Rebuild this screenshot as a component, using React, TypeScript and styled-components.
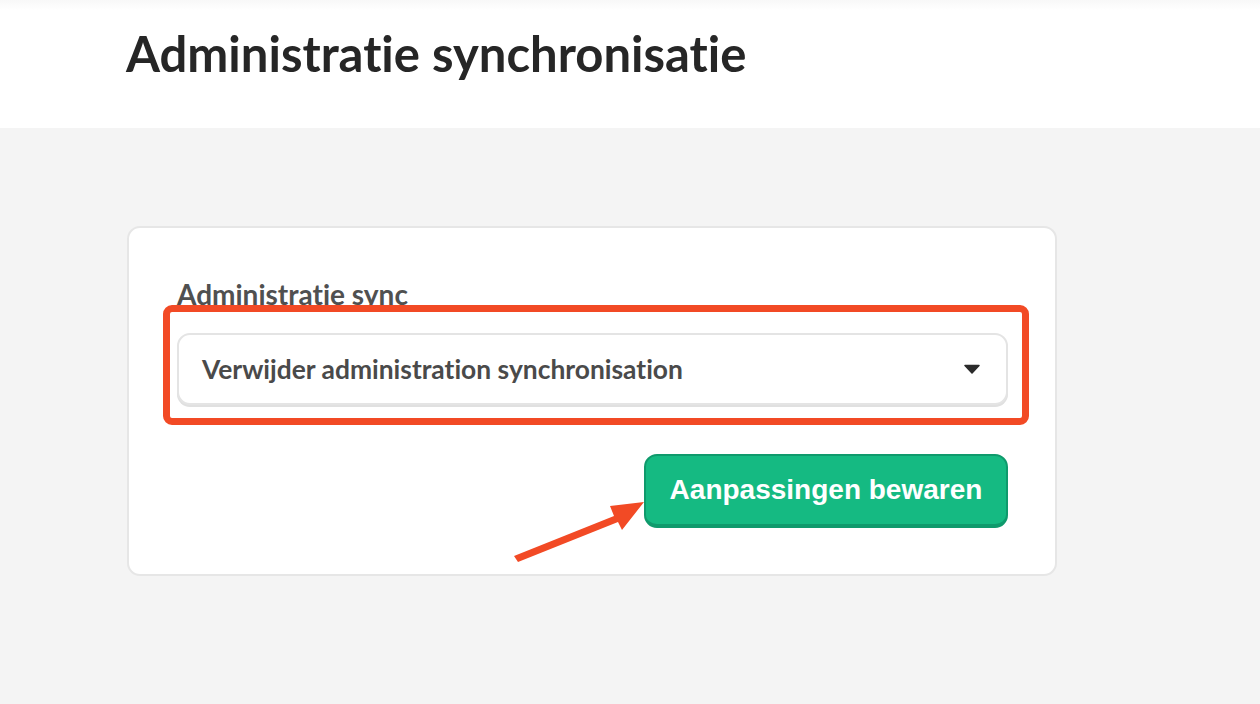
import React from "react";
import styled, { createGlobalStyle } from "styled-components";

const GlobalStyle = createGlobalStyle`
  html, body {
    margin: 0;
    padding: 0;
    background: #f4f4f4;
    width: 1260px;
    height: 704px;
    overflow: hidden;
  }
  * { box-sizing: border-box; font-variant-ligatures: none; }
`;

const Page = styled.div`
  width: 1260px;
  height: 704px;
  background: #f4f4f4;
  font-family: Lato, "Open Sans", sans-serif;
`;

const Header = styled.header`
  height: 128px;
  background: linear-gradient(#f8f8f8 0px, #ffffff 10px);
  padding: 25px 0 0 126px;
`;

const Title = styled.h1`
  margin: 0;
  font-family: Lato, sans-serif;
  font-weight: 700;
  font-size: 49px;
  line-height: 56px;
  color: #262626;
`;

const Main = styled.main`
  padding: 98px 0 0 127px;
`;

const Card = styled.section`
  width: 930px;
  height: 350px;
  background: #ffffff;
  border: 2px solid #e6e6e6;
  border-radius: 13px;
  padding: 52px 48px 0 48px;
  display: flex;
  flex-direction: column;
`;

const Label = styled.label`
  font-family: Lato, sans-serif;
  font-weight: 700;
  font-size: 28px;
  line-height: 28px;
  color: #505050;
  height: 28px;
  white-space: nowrap;
`;

const FieldWrap = styled.div`
  position: relative;
  margin-top: 25px;
`;

const Highlight = styled.div`
  position: absolute;
  left: -14px;
  top: -28px;
  right: -22px;
  bottom: -20px;
  border: 7px solid #f24a25;
  border-radius: 9px;
  pointer-events: none;
`;

const Select = styled.div`
  height: 72px;
  width: 831px;
  border: 2px solid #e4e4e4;
  border-radius: 13px;
  background: #ffffff;
  box-shadow: 0 2px 0 #e0e0e0;
  display: flex;
  align-items: center;
  justify-content: space-between;
  padding: 0 26px 0 23px;
`;

const SelectText = styled.span`
  font-family: Lato, sans-serif;
  font-weight: 700;
  font-size: 26.4px;
  color: #4a4a4a;
  white-space: nowrap;
`;

const Caret = styled.svg`
  width: 16px;
  height: 10px;
  display: block;
`;

const Actions = styled.div`
  display: flex;
  justify-content: flex-end;
  margin-top: 49px;
  width: 831px;
  position: relative;
`;

const SaveButton = styled.button`
  height: 74px;
  width: 364px;
  border: 2px solid #0f9a6c;
  border-bottom-width: 4px;
  border-radius: 13px;
  background: #15ba82;
  color: #ffffff;
  font-family: "Liberation Sans", Arial, sans-serif;
  font-weight: 700;
  font-size: 28px;
  padding: 0;
  cursor: pointer;
`;

const Arrow = styled.svg`
  position: absolute;
  left: 335px;
  top: 46px;
  width: 134px;
  height: 60px;
  overflow: visible;
`;

export default function App() {
  return (
    <Page>
      <GlobalStyle />
      <Header>
        <Title>Administratie synchronisatie</Title>
      </Header>
      <Main>
        <Card>
          <Label>Administratie sync</Label>
          <FieldWrap>
            <Select>
              <SelectText>Verwijder administration synchronisation</SelectText>
              <Caret viewBox="0 0 16 10">
                <path d="M1 1.5 L15 1.5 L8 9 Z" fill="#2b2b2b" strokeLinejoin="round" stroke="#2b2b2b" strokeWidth="1.5" />
              </Caret>
            </Select>
            <Highlight />
          </FieldWrap>
          <Actions>
            <SaveButton>Aanpassingen bewaren</SaveButton>
            <Arrow viewBox="0 0 134 60">
              <path
                d="M2 56 L102 16 L98 6 L132 2 L110 30 L106 22 L6 62 Z"
                fill="#f24a25"
              />
            </Arrow>
          </Actions>
        </Card>
      </Main>
    </Page>
  );
}
